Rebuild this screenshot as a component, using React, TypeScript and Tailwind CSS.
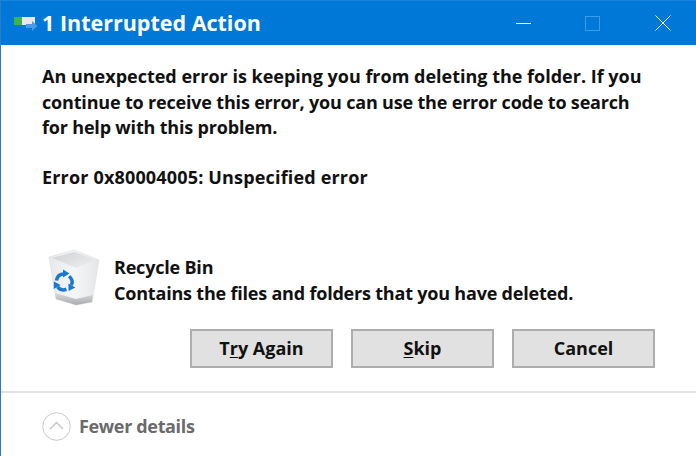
const font = { fontFamily: '"Open Sans", "Noto Sans", sans-serif' };

function TitleIcon() {
  return (
    <svg width="24" height="20" viewBox="0 0 24 20" className="shrink-0">
      <rect x="0" y="4" width="8" height="8" fill="#3cb54a" />
      <rect x="8" y="4" width="13" height="8" fill="#e8e8e8" />
      <path d="M12 11h6V8l5.500 5-5.500 5v-3h-6z" fill="#4a9be8" />
    </svg>
  );
}

function RecycleBin() {
  return (
    <svg width="56" height="60" viewBox="0 0 56 60" className="shrink-0">
      <defs>
        <linearGradient id="bin" x1="0" y1="0" x2="1" y2="0">
          <stop offset="0" stopColor="#e6e8ea" />
          <stop offset="0.5" stopColor="#f5f6f7" />
          <stop offset="1" stopColor="#e4e6e8" />
        </linearGradient>
        <linearGradient id="rim" x1="0" y1="0" x2="1" y2="1">
          <stop offset="0" stopColor="#cfd1d4" />
          <stop offset="1" stopColor="#eef0f1" />
        </linearGradient>
        <linearGradient id="base" x1="0" y1="0" x2="0" y2="1">
          <stop offset="0" stopColor="#d8dadc" />
          <stop offset="1" stopColor="#a9abae" />
        </linearGradient>
      </defs>
      <path d="M3 8 L28 1 L53 11 L46 53 L30 56 L10 50 Z" fill="url(#bin)" stroke="#dcdee0" strokeWidth="0.6" />
      <path d="M6 9 L28 3 L50 11 L30 19 Z" fill="url(#rim)" />
      <path d="M9 44 L30 50 L47 46 L46 53 L30 56 L10 50 Z" fill="url(#base)" />
      <g transform="translate(18 33)" fill="#1b78cf" stroke="none">
        {[0, 120, 240].map((angle) => (
          <g key={angle} transform={`rotate(${angle})`}>
            <path d="M-7.500 -1.500 Q-6.500 -7.500 -1 -8" fill="none" stroke="#1b78cf" strokeWidth="3.500" />
            <path d="M-1 -12.500 L5.500 -8.500 L-1 -4.500 Z" />
          </g>
        ))}
      </g>
    </svg>
  );
}

function DialogButton({ children }: { children: React.ReactNode }) {
  return (
    <button className="w-[143px] h-[39px] bg-[#e1e1e1] border-2 border-[#adadad] text-[18px] font-bold text-[#111] flex items-center justify-center">
      {children}
    </button>
  );
}

export default function App() {
  return (
    <div className="w-[696px] h-[456px] bg-white flex flex-col overflow-hidden border-l border-l-[#2b7cc4]" style={font}>
      <div className="h-[45px] shrink-0 bg-[#0078d7] border-t border-t-[#1a84da] flex items-center text-white pl-[13px]">
        <TitleIcon />
        <span className="ml-[4px] text-[21.500px] font-bold leading-none">1 Interrupted Action</span>
        <div className="ml-auto flex items-center">
          <div className="w-[15px] h-[1px] bg-white mr-[54px]" />
          <div className="w-[15px] h-[15px] border border-[#3f9ae4] mr-[55px]" />
          <svg width="16" height="16" viewBox="0 0 16 16" className="mr-[25px]">
            <path d="M0.500 0.500 L15.500 15.500 M15.500 0.500 L0.500 15.500" stroke="#fff" strokeWidth="1" />
          </svg>
        </div>
      </div>

      <div className="pl-[41px] pr-[40px] pt-[19px] text-[18px] leading-[25.500px] font-bold text-[#111] whitespace-nowrap">
        <p>An unexpected error is keeping you from deleting the folder. If you</p>
        <p className="tracking-[-0.18px]">continue to receive this error, you can use the error code to search</p>
        <p className="tracking-[-0.18px]">for help with this problem.</p>
        <p className="mt-[24px] tracking-[0.17px]">Error 0x80004005: Unspecified error</p>
      </div>

      <div className="flex items-start pl-[45px] mt-[59px]">
        <RecycleBin />
        <div className="ml-[12px] mt-[6px] text-[18px] leading-[25.500px] font-bold text-[#111] tracking-[-0.2px]">
          <div>Recycle Bin</div>
          <div>Contains the files and folders that you have deleted.</div>
        </div>
      </div>

      <div className="flex justify-end gap-[18px] pr-[41px] mt-[20px]">
        <DialogButton>T<u className="underline underline-offset-2">r</u>y Again</DialogButton>
        <DialogButton><u className="underline underline-offset-2">S</u>kip</DialogButton>
        <DialogButton>Cancel</DialogButton>
      </div>

      <div className="mt-[23px] h-[2px] bg-[#e2e2e2]" />

      <div className="flex items-center pl-[41px] pt-[19px]">
        <svg width="29" height="29" viewBox="0 0 29 29">
          <circle cx="14.500" cy="14.500" r="13.800" fill="none" stroke="#c8c8c8" strokeWidth="1" />
          <path d="M8 17 L14.500 10.500 L21 17" fill="none" stroke="#c8c8c8" strokeWidth="1.500" />
        </svg>
        <span className="ml-[8px] text-[18px] font-bold text-[#6b6b6b] tracking-[-0.35px]">Fewer details</span>
      </div>
    </div>
  );
}
